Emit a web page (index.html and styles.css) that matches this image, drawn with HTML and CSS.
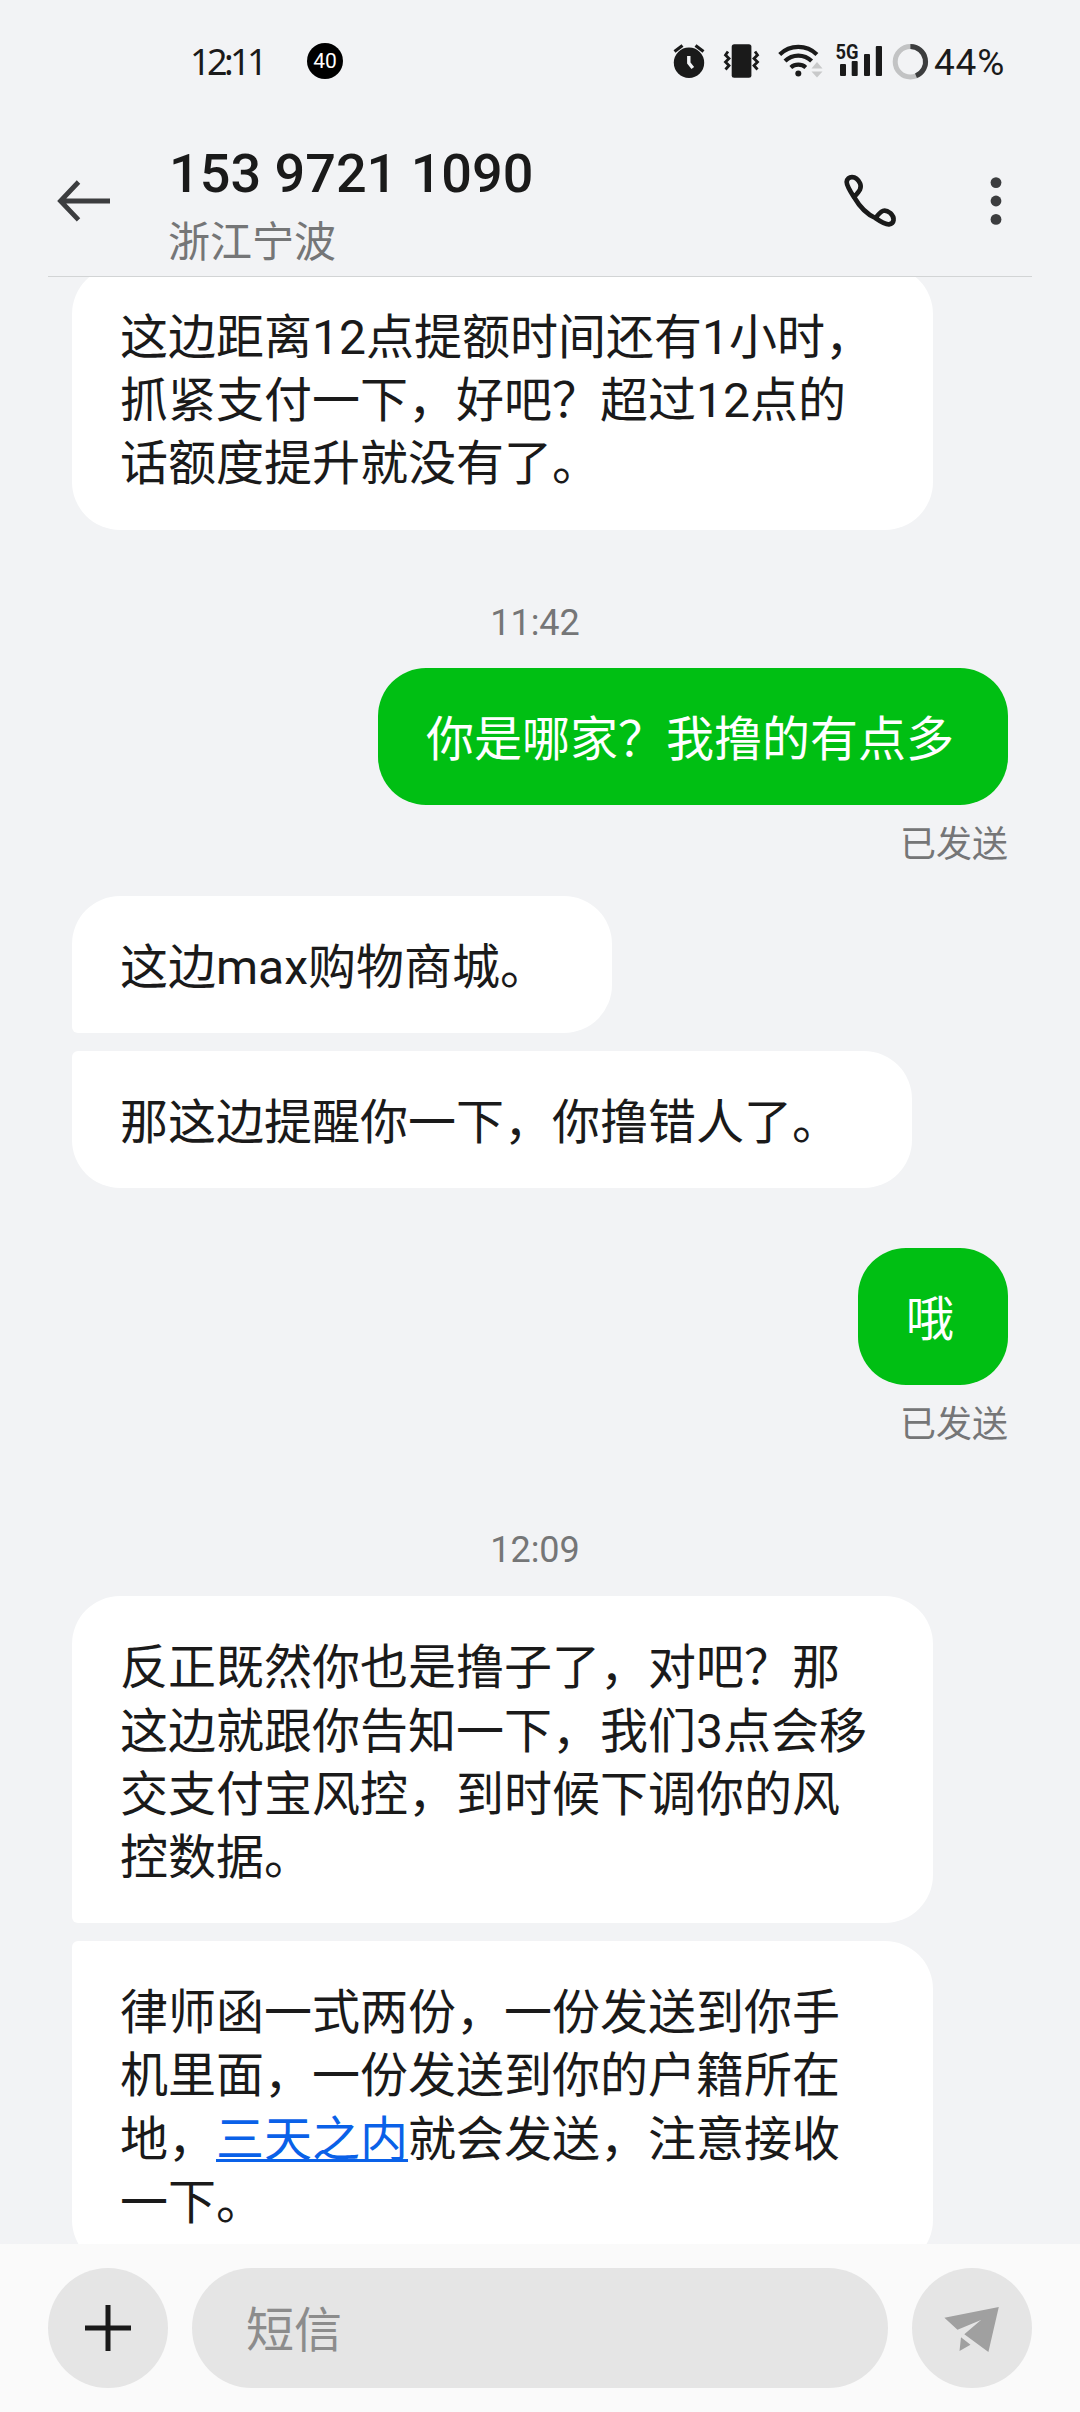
FILE: index.html
```html
<!DOCTYPE html>
<html lang="zh-CN">
<head>
<meta charset="utf-8">
<title>153 9721 1090</title>
<link rel="stylesheet" href="styles.css">
</head>
<body>
<div class="phone">
  <div class="status-bar">
    <span class="clock">12:11</span>
    <span class="badge">40</span>
    <svg class="status-icons" viewBox="670 40 262 42" width="262" height="42">
      <g fill="#1a1a1a">
        <circle cx="689" cy="62.8" r="15.2"/>
        <path d="M674.5 51.5l8-6M703.500 51.500l-8-6" stroke="#1a1a1a" stroke-width="3.200"/>
        <path d="M688.800 56v7l4 5" fill="none" stroke="#f2f3f5" stroke-width="3.400"/>
        <rect x="731.700" y="44.300" width="19.700" height="33.400" rx="2.500"/>
        <path d="M728 51.500l-2.500 3.500 3.500 3.500-3.500 3.500 3.500 3.500-3.500 4M755 51.500l2.500 3.500-3.500 3.500 3.500 3.500-3.500 3.500 3.500 4" fill="none" stroke="#1a1a1a" stroke-width="2.800"/>
        <path d="M779.700 54.500a26.500 26.500 0 0 1 37.200 0M785 61a19 19 0 0 1 26.600 0M790.800 67.500a11.500 11.500 0 0 1 15 0" fill="none" stroke="#1a1a1a" stroke-width="4.200"/>
        <circle cx="798.300" cy="73.500" r="3"/>
        <path d="M811.500 68.500l5.500-6.500 5.500 6.500zM811.500 71.500l5.500 6 5.500-6z" fill="#c8c9ca"/>
        <rect x="840" y="64" width="6" height="12" rx="1"/>
        <rect x="851.700" y="61" width="6" height="15" rx="1"/>
        <rect x="864" y="54" width="6" height="22" rx="1"/>
        <rect x="875.800" y="46" width="6.200" height="30" rx="1"/>
      </g>
      <text class="network" x="835.500" y="59" textLength="23" lengthAdjust="spacingAndGlyphs">5G</text>
      <circle cx="910.400" cy="61.700" r="15.200" fill="none" stroke="#c2c3c4" stroke-width="5"/>
      <path d="M910.400 46.500a15.200 15.200 0 0 1 5.600 29.300" fill="none" stroke="#3c3d3e" stroke-width="5"/>
    </svg>
    <span class="battery">44%</span>
  </div>

  <header class="header">
    <svg class="back" viewBox="50 173 66 56" width="66" height="56">
      <path d="M110 201H60M78.500 182L60.500 201l18 18.800" fill="none" stroke="#3c3d3f" stroke-width="4.800"/>
    </svg>
    <div class="contact">
      <h1 class="number">153 9721 1090</h1>
      <p class="region">浙江宁波</p>
    </div>
    <svg class="call" viewBox="180 120 180 180" width="60" height="60">
      <path d="M223 203C208 180 200 165 200 156C202 137 228 135 240 160C246 173 240 182 222 201C240 232 264 254 286 264C302 275 318 284 327 283C343 281 346 263 331 249C314 236 304 240 287 264" fill="none" stroke="#1a1a1a" stroke-width="14" stroke-linejoin="round"/>
    </svg>
    <svg class="more" viewBox="0 0 12 50" width="12" height="50" fill="#3c3d3f">
      <circle cx="6" cy="6.600" r="5.400"/><circle cx="6" cy="25" r="5.400"/><circle cx="6" cy="43.400" r="5.400"/>
    </svg>
  </header>

  <main class="thread">
    <div class="bubble in full">这边距离12点提额时间还有1小时，<br>抓紧支付一下，好吧？超过12点的<br>话额度提升就没有了。</div>
    <time class="time">11:42</time>
    <div class="bubble out">你是哪家？我撸的有点多</div>
    <div class="sent">已发送</div>
    <div class="bubble in first shop">这边max购物商城。</div>
    <div class="bubble in last warning">那这边提醒你一下，你撸错人了。</div>
    <div class="bubble out reply">哦</div>
    <div class="sent">已发送</div>
    <time class="time late">12:09</time>
    <div class="bubble in full first">反正既然你也是撸子了，对吧？那<br>这边就跟你告知一下，我们3点会移<br>交支付宝风控，到时候下调你的风<br>控数据。</div>
    <div class="bubble in full last">律师函一式两份，一份发送到你手<br>机里面，一份发送到你的户籍所在<br>地，<a class="link">三天之内</a>就会发送，注意接收<br>一下。</div>
  </main>

  <footer class="composer">
    <div class="round">
      <svg viewBox="0 0 46 46" width="46" height="46"><path d="M23 0v46M0 23h46" stroke="#1a1a1a" stroke-width="5"/></svg>
    </div>
    <div class="field">短信</div>
    <div class="round">
      <svg viewBox="942 2298 60 60" width="60" height="60" fill="#a0a0a0">
        <path d="M998.800 2307L944.400 2317.700L957.500 2329.700L981 2320L964.300 2334.300L988.400 2352ZM961 2337.300L970.500 2344.700L959.500 2351Z"/>
      </svg>
    </div>
  </footer>
</div>
</body>
</html>
```
FILE: styles.css
```css
* { box-sizing: border-box; }
body {
  margin: 0;
  background: #f2f3f5;
  color: #1a1a1a;
  font-family: Roboto, "Noto Sans CJK SC", sans-serif;
}
.phone {
  width: 1080px;
  height: 2412px;
  display: flex;
  flex-direction: column;
  overflow: hidden;
}
.status-bar {
  height: 122px;
  display: flex;
  align-items: center;
  padding-left: 190px;
  line-height: 40px;
  font-size: 36px;
}
.clock {
  width: 117px;
  padding-top: 2px;
  font-family: "Noto Sans", sans-serif;
  letter-spacing: -3.6px;
  white-space: nowrap;
}
.badge {
  width: 36px;
  height: 36px;
  border-radius: 50%;
  background: #000;
  color: #fff;
  font-size: 21px;
  line-height: 36px;
  text-align: center;
}
.status-icons { margin-left: 327px; }
.network { font-size: 21px; font-weight: 700; fill: #1a1a1a; }
.battery { margin-left: 2px; line-height: 42px; margin-top: 3px; font-size: 37px; letter-spacing: 0.8px; }
.header {
  height: 155px;
  margin: 0 48px;
  display: flex;
  align-items: flex-start;
  border-bottom: 1px solid #d2d4d5;
}
.back { margin: 51px 0 0 2px; }
.contact { width: 671px; margin-left: 53px; padding-top: 20px; }
.number { margin: 0; font-size: 54px; font-weight: 500; line-height: 64px; }
.region { margin: 6px 0 0 -1px; font-size: 42px; line-height: 62px; color: #757677; }
.call { margin-top: 48px; }
.more { margin: 54px 0 0 90px; }
.thread {
  flex: 1;
  min-height: 0;
  overflow: hidden;
  display: flex;
  flex-direction: column;
  padding: 0 72px;
}
.bubble {
  flex: none;
  padding: 40px 0 34px 48px;
  border-radius: 48px;
  font-size: 48px;
  line-height: 63.2px;
  white-space: nowrap;
}
.in { align-self: flex-start; background: #fff; }
.full { width: 861px; }
.full:first-child { margin-top: -11px; }
.first { border-bottom-left-radius: 6px; }
.last { border-top-left-radius: 6px; margin-top: 18px; }
.out {
  align-self: flex-end;
  padding-right: 54px;
  background: #00bf13;
  color: #fff;
}
.shop { width: 540px; margin-top: 32px; }
.warning { width: 840px; }
.reply { margin-top: 60px; }
.time {
  align-self: center;
  position: relative;
  left: -5px;
  margin: 72px 0 23px;
  font-size: 36px;
  line-height: 43px;
  color: #757677;
}
.late { margin: 85px 0 24px; }
.sent {
  align-self: flex-end;
  margin-top: 13px;
  height: 46px;
  font-size: 36px;
  line-height: 54px;
  color: #757677;
}
.link { color: #0a61e8; text-decoration: underline; text-decoration-thickness: 3px; text-underline-offset: 3px; }
.composer {
  height: 168px;
  display: flex;
  align-items: center;
  gap: 24px;
  padding: 0 48px;
  background: #fafafa;
}
.round, .field { height: 120px; border-radius: 60px; background: #e5e5e5; }
.round { width: 120px; display: flex; align-items: center; justify-content: center; }
.field { flex: 1; padding-left: 54px; font-size: 48px; line-height: 126px; color: #8c8c8c; }
```
